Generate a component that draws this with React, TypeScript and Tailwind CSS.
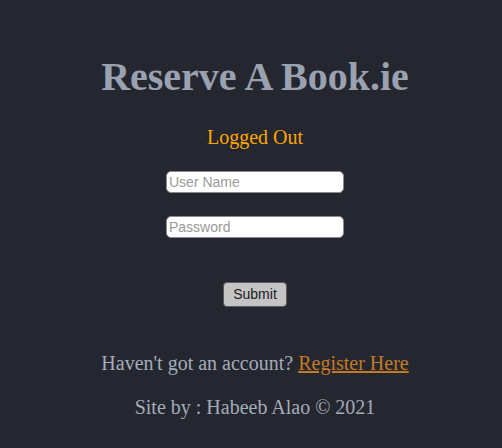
import React from 'react';

export default function App() {
  return (
    <div className="w-[502px] h-[448px] pl-[8px] bg-[#24272f] flex flex-col items-center text-[#a5acba] font-['Liberation_Serif',serif] overflow-hidden">
      <h1 className="mt-[54px] text-[40px] leading-[46px] font-bold text-[#9aa1b0]">Reserve A Book.ie</h1>
      <p className="mt-[25px] text-[20px] leading-[24px] text-[#ffa500]">Logged Out</p>
      <form className="flex flex-col items-center" onSubmit={(e) => e.preventDefault()}>
        <input
          type="text"
          placeholder="User Name"
          className="mt-[22px] w-[178px] h-[22px] px-[2px] rounded-[5px] bg-white border border-[#8a8a8a] text-[14px] text-black font-['Liberation_Sans',sans-serif] placeholder:text-[#9a9a9a] outline-none"
        />
        <input
          type="password"
          placeholder="Password"
          className="mt-[23px] w-[178px] h-[22px] px-[2px] rounded-[5px] bg-white border border-[#8a8a8a] text-[14px] text-black font-['Liberation_Sans',sans-serif] placeholder:text-[#9a9a9a] outline-none"
        />
        <button
          type="submit"
          className="mt-[44px] w-[64px] h-[25px] rounded-[4px] bg-[#c4c4c4] border border-[#5a5a5a] text-[14px] text-[#1a1a1a] font-['Liberation_Sans',sans-serif]"
        >
          Submit
        </button>
      </form>
      <p className="mt-[44px] text-[20px] leading-[24px]">
        Haven't got an account?{' '}
        <a href="#" className="text-[#c47a25] underline">Register Here</a>
      </p>
      <p className="mt-[20px] text-[20px] leading-[24px]">Site by : Habeeb Alao © 2021</p>
    </div>
  );
}
